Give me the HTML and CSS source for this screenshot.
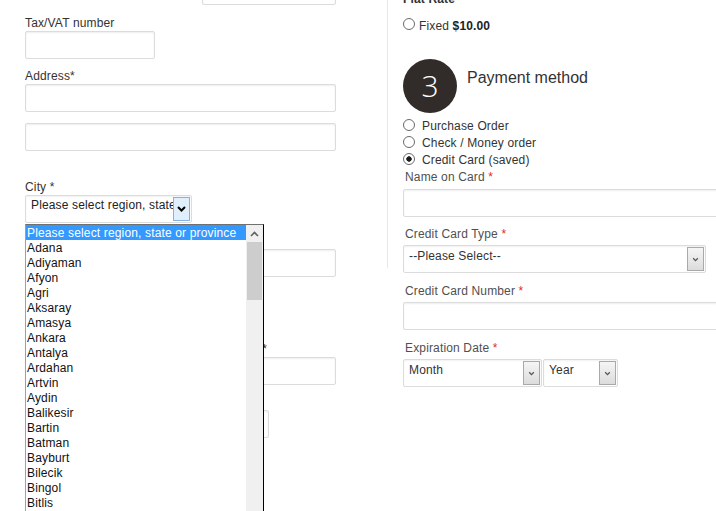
FILE: index.html
```html
<!DOCTYPE html>
<html lang="en">
<head>
<meta charset="utf-8">
<title>Checkout</title>
<link rel="stylesheet" href="styles.css">
</head>
<body>
<div class="page">
  <div class="billing">
    <div class="row2 row-top">
      <div></div>
      <input class="input" type="text">
    </div>

    <label class="lbl">Tax/VAT number</label>
    <input class="input w-tax" type="text">

    <label class="lbl">Address*</label>
    <input class="input w-full addr1" type="text">
    <input class="input w-full addr2" type="text">

    <label class="lbl">City *</label>
    <div class="city">
      <div class="select select-city">
        <span class="select-text">Please select region, state or province</span>
        <span class="select-btn btn-focus">
          <svg width="9" height="6" viewBox="0 0 9 6"><path d="M1 1l3.5 3.5L8 1" fill="none" stroke="#000" stroke-width="2"/></svg>
        </span>
      </div>
      <div class="dropdown">
        <ul class="dd-list">
          <li class="dd-sel">Please select region, state or province</li>
          <li>Adana</li>
          <li>Adiyaman</li>
          <li>Afyon</li>
          <li>Agri</li>
          <li>Aksaray</li>
          <li>Amasya</li>
          <li>Ankara</li>
          <li>Antalya</li>
          <li>Ardahan</li>
          <li>Artvin</li>
          <li>Aydin</li>
          <li>Balikesir</li>
          <li>Bartin</li>
          <li>Batman</li>
          <li>Bayburt</li>
          <li>Bilecik</li>
          <li>Bingol</li>
          <li>Bitlis</li>
          <li>Bolu</li>
          <li>Burdur</li>
          <li>Bursa</li>
        </ul>
        <div class="dd-scroll">
          <div class="dd-up">
            <svg width="9" height="6" viewBox="0 0 9 6"><path d="M1 5l3.5-3.5L8 5" fill="none" stroke="#606060" stroke-width="1.6"/></svg>
          </div>
          <div class="dd-thumb"></div>
        </div>
      </div>
    </div>

    <label class="lbl">District *</label>
    <input class="input w-full district" type="text">

    <label class="lbl">Zip/Postal Code *</label>
    <input class="input w-half zip" type="text">

    <div class="row2 row-phone">
      <div>
        <label class="lbl">Country *</label>
        <input class="input" type="text">
      </div>
      <div>
        <label class="lbl">Telephone *</label>
        <input class="input" type="text">
      </div>
    </div>

    <label class="lbl">Fax</label>
    <input class="input w-fax" type="text">
  </div>

  <div class="divider"></div>

  <div class="payment">
    <div class="flat-title">Flat Rate</div>
    <label class="fixed"><span class="radio"></span><span class="fixed-text">Fixed <b>$10.00</b></span></label>

    <div class="step">
      <div class="step-num">3</div>
      <h2 class="step-title">Payment method</h2>
    </div>

    <div class="methods">
      <label class="method"><span class="radio"></span><span class="method-text">Purchase Order</span></label>
      <label class="method"><span class="radio"></span><span class="method-text">Check / Money order</span></label>
      <label class="method"><span class="radio checked"></span><span class="method-text">Credit Card (saved)</span></label>
    </div>

    <label class="plabel card-name-label">Name on Card <em>*</em></label>
    <input class="input pinput card-name" type="text">

    <label class="plabel">Credit Card Type <em>*</em></label>
    <div class="select card-type">
      <span class="select-text">--Please Select--</span>
      <span class="select-btn">
        <svg width="7" height="5" viewBox="0 0 7 5"><path d="M1.2 1.3l2.3 2.3 2.3-2.3" fill="none" stroke="#555" stroke-width="1.3"/></svg>
      </span>
    </div>

    <label class="plabel">Credit Card Number <em>*</em></label>
    <input class="input pinput card-number" type="text">

    <label class="plabel">Expiration Date <em>*</em></label>
    <div class="expiry">
      <div class="select month">
        <span class="select-text">Month</span>
        <span class="select-btn">
          <svg width="7" height="5" viewBox="0 0 7 5"><path d="M1.2 1.3l2.3 2.3 2.3-2.3" fill="none" stroke="#555" stroke-width="1.3"/></svg>
        </span>
      </div>
      <div class="select year">
        <span class="select-text">Year</span>
        <span class="select-btn">
          <svg width="7" height="5" viewBox="0 0 7 5"><path d="M1.2 1.3l2.3 2.3 2.3-2.3" fill="none" stroke="#555" stroke-width="1.3"/></svg>
        </span>
      </div>
    </div>
  </div>
</div>
</body>
</html>
```

FILE: styles.css
```css
* {
  box-sizing: border-box;
}

html,
body {
  margin: 0;
  height: 511px;
  overflow: hidden;
  background: #fff;
}

body {
  font-family: "Liberation Sans", Arial, sans-serif;
  font-size: 12px;
  line-height: 15px;
  letter-spacing: 0.15px;
  color: #333;
}

.page {
  display: flex;
  align-items: flex-start;
  margin-top: -23px;
}

/* ---------- left column ---------- */
.billing {
  flex: 0 0 387px;
  padding-left: 25px;
}

.divider {
  flex: 0 0 1px;
  height: 291px;
  background: #e8e8e8;
}

.lbl {
  display: block;
  padding-top: 1px;
  margin-bottom: 0;
}

.input {
  display: block;
  width: 100%;
  height: 28px;
  margin: 0;
  padding: 0 5px;
  border: 1px solid #dcdcdc;
  border-radius: 2px;
  background: #fff;
  box-shadow: inset 0 1px 2px rgba(0, 0, 0, 0.07);
  font: inherit;
  color: #333;
}

.row2 {
  display: grid;
  grid-template-columns: 166px 134px;
  column-gap: 11px;
}

.row-top {
  margin-bottom: 10px;
}

.w-tax {
  width: 130px;
  margin-bottom: 9px;
}

.w-full {
  width: 311px;
}

.w-half {
  width: 166px;
}

.addr1 {
  margin-bottom: 11px;
}

.addr2 {
  margin-bottom: 28px;
}

.district,
.zip {
  margin-bottom: 10px;
}

.row-phone {
  margin-bottom: 9px;
}

.w-fax {
  width: 244px;
}

/* ---------- select look-alike ---------- */
.select {
  display: flex;
  height: 28px;
  padding: 1px 1px 1px 5px;
  border: 1px solid #dcdcdc;
  border-radius: 2px;
  background: #fff;
  box-shadow: inset 0 1px 2px rgba(0, 0, 0, 0.06);
}

.select-text {
  flex: 1;
  min-width: 0;
  overflow: hidden;
  white-space: nowrap;
  padding-top: 2px;
  line-height: 15px;
  color: #333;
}

.select-btn {
  flex: 0 0 17px;
  height: 24px;
  display: flex;
  align-items: center;
  justify-content: center;
  border: 1px solid #a9a9a9;
  background: linear-gradient(#f5f5f5, #dcdcdc);
}

.btn-focus {
  border-color: #7eb4ea;
  background: #e1effc;
}

.city {
  position: relative;
  margin-bottom: 10px;
}

.select-city {
  width: 167px;
}

.select-city .select-text {
  padding-top: 1px;
  color: #222;
}

/* ---------- open dropdown list ---------- */
.dropdown {
  position: absolute;
  top: 29px;
  left: 0;
  z-index: 10;
  width: 239px;
  display: flex;
  background: #fff;
  border: 1px solid #000;
  border-left-color: #a0a0a0;
  border-top-color: #707070;
}

.dd-list {
  flex: 1;
  margin: 0;
  padding: 0;
  list-style: none;
  color: #111;
}

.dd-list li {
  height: 15px;
  line-height: 15px;
  padding: 1px 0 0 1px;
  white-space: nowrap;
}

.dd-list .dd-sel {
  background: #3399ff;
  color: #fff;
}

.dd-scroll {
  flex: 0 0 17px;
  background: #f0f0f0;
}

.dd-up {
  height: 17px;
  display: flex;
  align-items: center;
  justify-content: center;
}

.dd-thumb {
  height: 58px;
  margin: 0 1px;
  background: #cdcdcd;
}

/* ---------- right column ---------- */
.payment {
  flex: 1;
  min-width: 0;
  padding-left: 15px;
}

.flat-title {
  margin-top: 14px;
  padding-top: 1px;
  font-weight: bold;
}

.fixed {
  display: flex;
  align-items: flex-start;
  gap: 4px;
  height: 15px;
  margin-top: 11px;
}

.fixed-text {
  padding-top: 1px;
}

.fixed b {
  color: #222;
}

.radio {
  flex: none;
  width: 12px;
  height: 12px;
  border: 1px solid #6a6a6a;
  border-radius: 50%;
  background: #fff;
}

.radio.checked {
  background: radial-gradient(circle, #1c1c1c 0 2.4px, #fff 3px);
}

.step {
  display: flex;
  align-items: flex-start;
  gap: 10px;
  margin-top: 26px;
}

.step-num {
  flex: none;
  width: 54px;
  height: 54px;
  border-radius: 50%;
  background: #312c29;
  color: #fff;
  font-family: "Open Sans", "Liberation Sans", sans-serif;
  font-weight: 300;
  font-size: 30px;
  letter-spacing: 0;
  line-height: 54px;
  text-align: center;
}

.step-title {
  margin: 9px 0 0;
  font-size: 16px;
  font-weight: normal;
  letter-spacing: 0;
  line-height: 20px;
  color: #333;
}

.methods {
  margin-top: 4px;
}

.method {
  display: flex;
  align-items: flex-start;
  gap: 7px;
  height: 17px;
  color: #333;
}

.method .radio {
  margin-top: 2px;
}

.method-text {
  padding-top: 1px;
  line-height: 17px;
}

.plabel {
  display: block;
  padding: 1px 0 0 2px;
  margin-bottom: 3px;
  color: #505050;
}

.plabel em {
  font-style: normal;
  color: #e02b27;
}

.card-name-label {
  margin-top: 1px;
  margin-bottom: 4px;
}

.pinput {
  width: 316px;
}

.card-name {
  margin-bottom: 9px;
}

.card-type {
  width: 303px;
  margin-bottom: 10px;
}

.card-number {
  margin-bottom: 10px;
}

.expiry {
  display: flex;
  gap: 1px;
}

.month {
  width: 139px;
}

.year {
  width: 75px;
}
```
